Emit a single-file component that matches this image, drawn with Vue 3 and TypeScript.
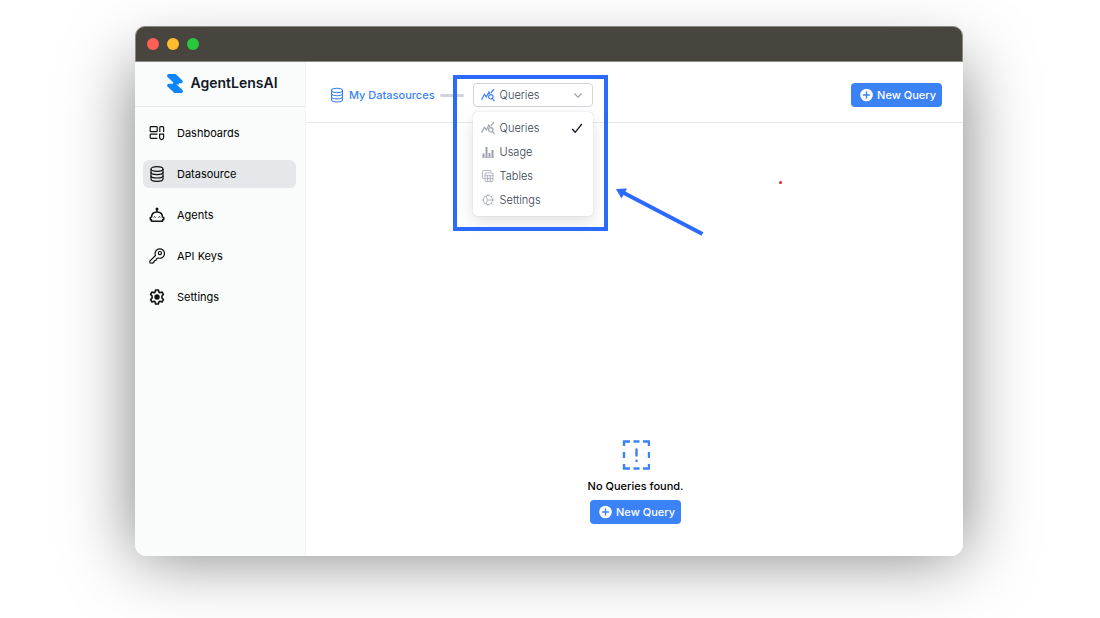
<script setup lang="ts">
import { ref } from 'vue'

type View = 'Queries' | 'Usage' | 'Tables' | 'Settings'

const navItems = ['Dashboards', 'Datasource', 'Agents', 'API Keys', 'Settings']
const views: View[] = ['Queries', 'Usage', 'Tables', 'Settings']

const activeNav = ref('Datasource')
const activeView = ref<View>('Queries')
const menuOpen = ref(true)

function selectView(view: View) {
  activeView.value = view
  menuOpen.value = false
}
</script>

<template>
  <div class="stage">
    <div class="window">
      <div class="titlebar">
        <span class="light red"></span>
        <span class="light yellow"></span>
        <span class="light green"></span>
      </div>

      <div class="body">
        <aside class="sidebar">
          <div class="brand">
            <svg class="logo" viewBox="0 0 16 19" aria-hidden="true">
              <path d="M1.5 0H8.6L15.4 6.6Q16.4 9.3 14 9.3H7.2L.3 2.7Q-.4 .4 1.5 0Z" fill="#0a84ff" />
              <path d="M1.6 9.7H8.8L15.6 16Q16.4 18.6 14.4 19H7.4L.5 12.4Q-.5 10.1 1.6 9.7Z" fill="#0a84ff" />
              <path d="M6 8.500h6v2H6z" fill="#0a84ff" />
            </svg>
            <span>AgentLensAI</span>
          </div>
          <nav class="nav">
            <a
              v-for="item in navItems"
              :key="item"
              href="#"
              class="nav-item"
              :class="{ active: item === activeNav }"
              @click.prevent="activeNav = item"
            >
              <svg v-if="item === 'Dashboards'" class="nav-icon" viewBox="0 0 16 16" aria-hidden="true">
                <g fill="none" stroke="#111" stroke-width="1.2" stroke-linejoin="round">
                  <rect x="1.2" y="1.7" width="7" height="5" rx=".8" />
                  <path d="M10.8 7V2.6q0-.9.9-.9h2q.9 0 .9.9V7" />
                  <path d="M8.4 9.2H2q-.8 0-.8.8v2.600q0 .8.8.8h6.400" />
                  <path d="M10.600 9.200h4v3.200q0 1.500-2 2.300-2-.8-2-2.300z" />
                </g>
              </svg>
              <svg v-else-if="item === 'Datasource'" class="nav-icon" viewBox="0 0 16 16" aria-hidden="true">
                <g fill="none" stroke="#111" stroke-width="1.2">
                  <ellipse cx="8" cy="3" rx="6" ry="2.300" />
                  <path d="M2 3v10c0 1.300 2.700 2.300 6 2.300s6-1 6-2.300V3" />
                  <path d="M2 6.300c0 1.300 2.700 2.300 6 2.300s6-1 6-2.300M2 9.700C2 11 4.700 12 8 12s6-1 6-2.300" />
                </g>
              </svg>
              <svg v-else-if="item === 'Agents'" class="nav-icon" viewBox="0 0 16 16" aria-hidden="true">
                <path d="M8 2v3M2.500 10.500C2.500 7 4.800 5 8 5s5.500 2 5.500 5.500M2.500 10.500H1.300v2.200h1.200v1.600h11v-1.600h1.200v-2.200h-1.200" fill="none" stroke="#111" stroke-width="1.500" stroke-linejoin="round" />
                <circle cx="8" cy="2" r="1.500" fill="#111" />
                <path d="M4.600 10.400q1-1.500 2 0M9.400 10.400q1-1.500 2 0" fill="none" stroke="#111" stroke-width="1" />
              </svg>
              <svg v-else-if="item === 'API Keys'" class="nav-icon" viewBox="0 0 16 16" aria-hidden="true">
                <g fill="none" stroke="#111" stroke-width="1.200" stroke-linejoin="round">
                  <path d="M6.500 7.500A4.700 4.700 0 1 1 9.300 10L7.500 10.800 7 12.300 5.500 12.500 5 14 3.600 15.200 1 15 .8 13.200Z" />
                  <circle cx="10.900" cy="5.100" r="1.600" />
                </g>
              </svg>
              <svg v-else class="nav-icon" viewBox="0 0 16 16" aria-hidden="true">
                <path d="M6.600 1h2.800l.4 2 1.200.7 2-.7 1.400 2.400L12.900 7v2l1.500 1.600L13 13l-2-.7-1.200.7-.4 2H6.600l-.4-2-1.200-.7-2 .7-1.400-2.400L3.100 9V7L1.600 5.400 3 3l2 .7L6.200 3z" fill="none" stroke="#111" stroke-width="1.600" stroke-linejoin="round" />
                <circle cx="8" cy="8" r="2.700" fill="#111" />
              </svg>
              <span>{{ item }}</span>
            </a>
          </nav>
        </aside>

        <main class="main">
          <header class="header">
            <a href="#" class="crumb" @click.prevent>
              <svg class="crumb-icon" viewBox="0 0 14 16" aria-hidden="true">
                <g fill="none" stroke="#3b82f6" stroke-width="1.100">
                  <ellipse cx="7" cy="3.500" rx="5.500" ry="2.200" />
                  <path d="M1.500 3.500v9.300c0 1.200 2.500 2.200 5.500 2.200s5.500-1 5.500-2.200V3.500" />
                  <path d="M1.500 6.600c0 1.200 2.500 2.200 5.500 2.200s5.500-1 5.500-2.200M1.500 9.700c0 1.200 2.500 2.200 5.500 2.200s5.500-1 5.500-2.200" />
                </g>
              </svg>
              <span>My Datasources</span>
            </a>
            <span class="divider"></span>

            <div class="picker">
              <button
                type="button"
                class="trigger"
                aria-haspopup="listbox"
                :aria-expanded="menuOpen"
                @click="menuOpen = !menuOpen"
              >
                <svg class="view-icon blue" viewBox="0 0 14 14" aria-hidden="true">
                  <path d="M.6 11.600 3.500 6.300l1.900 2.500 2.500-4.600.8 1.800M9.600 5.200 13 1.200" />
                  <circle cx="9.800" cy="8.800" r="2.200" />
                  <path d="m11.400 10.500 2 2.600" />
                </svg>
                <span class="label">{{ activeView }}</span>
                <svg class="chevron" viewBox="0 0 10 10" aria-hidden="true">
                  <path d="m1.300 3.500 3.700 3.700 3.700-3.700" />
                </svg>
              </button>

              <div v-if="menuOpen" class="menu" role="listbox" aria-label="View">
                <button
                  v-for="view in views"
                  :key="view"
                  type="button"
                  role="option"
                  class="option"
                  :aria-selected="view === activeView"
                  @click="selectView(view)"
                >
                  <svg v-if="view === 'Queries'" class="view-icon" viewBox="0 0 14 14" aria-hidden="true">
                    <path d="M.6 11.600 3.500 6.300l1.900 2.500 2.500-4.600.8 1.800M9.600 5.200 13 1.200" />
                    <circle cx="9.800" cy="8.800" r="2.200" />
                    <path d="m11.400 10.500 2 2.600" />
                  </svg>
                  <svg v-else-if="view === 'Usage'" class="view-icon solid" viewBox="0 0 14 14" aria-hidden="true">
                    <path d="M1.500 8.500h2V12h-2zM4.500 2h2v10h-2zM7.500 8h2v4h-2zM10.500 5h2v7h-2zM1 12.300h12v.7H1z" />
                  </svg>
                  <svg v-else-if="view === 'Tables'" class="view-icon thin" viewBox="0 0 14 14" aria-hidden="true">
                    <path d="M3.500 9.500H2.300q-.8 0-.8-.8V2.300q0-.8.8-.8h6.900q.8 0 .8.8V3.500" />
                    <rect x="4" y="4" width="8" height="8.500" rx=".8" />
                    <path d="M4 6.700h8M4 9.600h8M6.700 6.700v5.800M9.400 6.700v5.800" />
                  </svg>
                  <svg v-else class="view-icon thin" viewBox="0 0 14 14" aria-hidden="true">
                    <circle cx="7" cy="7" r="4.600" />
                    <path d="M7 2.400V.8M7 13.200v-1.600M2.400 7H.6M7 7h6.400M3.750 3.750 2.600 2.600M11.400 11.400l-1.150-1.150M3.750 10.250 2.600 11.400M11.400 2.600l-1.150 1.150M7 7 4.700 3M7 7l-2.300 4" />
                  </svg>
                  <span class="label">{{ view }}</span>
                  <svg v-if="view === activeView" class="check" viewBox="0 0 12 12" aria-hidden="true">
                    <path d="m1.200 7 3 3.300L10.800 2" />
                  </svg>
                </button>
              </div>

              <div class="highlight" aria-hidden="true"></div>
              <svg class="arrow" viewBox="0 0 90 50" aria-hidden="true">
                <path d="M7 4.500 86.500 46" stroke="#2b69ff" stroke-width="4" />
                <path d="M0 1 11 .5 5.500 10.500Z" fill="#2b69ff" />
              </svg>
            </div>

            <button type="button" class="primary push">
              <svg class="plus" viewBox="0 0 14 14" aria-hidden="true">
                <circle cx="7.500" cy="7" r="6.300" fill="#fff" />
                <path d="M7.500 4v6M4.500 7h6" stroke="#3b82f6" stroke-width="1.400" stroke-linecap="round" />
              </svg>
              <span>New Query</span>
            </button>
          </header>

          <section class="empty">
            <svg class="empty-icon" viewBox="0 0 28 30" aria-hidden="true">
              <g fill="none" stroke="#3b82f6" stroke-width="2.400">
                <path d="M2 6V1.500H8M21 1.500h6V6M27 24v4.500H21M8 28.500H2V24M11.500 1.500h6M11.500 28.500h6M2 12v6M27 12v6" />
                <path d="M14.500 9.500v6M14.500 20.800v.2" stroke-linecap="round" />
              </g>
            </svg>
            <p class="empty-text">No Queries found.</p>
            <button type="button" class="primary">
              <svg class="plus" viewBox="0 0 14 14" aria-hidden="true">
                <circle cx="7.500" cy="7" r="6.300" fill="#fff" />
                <path d="M7.500 4v6M4.500 7h6" stroke="#3b82f6" stroke-width="1.400" stroke-linecap="round" />
              </svg>
              <span>New Query</span>
            </button>
            <span class="marker" aria-hidden="true"></span>
          </section>
        </main>
      </div>
    </div>
  </div>
</template>

<style>
body {
  background: #fff;
}
</style>

<style scoped>
* {
  box-sizing: border-box;
}
.stage {
  display: flex;
  min-height: 100vh;
  padding: 26px 137px 62px 135px;
  overflow: hidden;
  font-family: Inter, "Liberation Sans", sans-serif;
  font-size: 11px;
  line-height: 16px;
  color: #111827;
}
button {
  margin: 0;
  font: inherit;
  cursor: pointer;
}
a {
  color: inherit;
  text-decoration: none;
}
svg {
  display: block;
  flex: none;
}
.window {
  position: relative;
  flex: 1;
  display: flex;
  flex-direction: column;
  min-width: 0;
}
.window::before {
  content: "";
  position: absolute;
  inset: 36px 0 0;
  border-radius: 12px;
  box-shadow: 0 0 68px rgba(0, 0, 0, 0.5);
}
.titlebar {
  position: relative;
  display: flex;
  align-items: center;
  gap: 8px;
  height: 36px;
  padding: 0 11px;
  background: #48443e;
  border: 1px solid #8b8984;
  border-radius: 10px 10px 0 0;
}
.light {
  width: 12px;
  height: 12px;
  border-radius: 50%;
}
.red {
  background: #ff5f57;
}
.yellow {
  background: #febc2e;
}
.green {
  background: #28c840;
}
.body {
  position: relative;
  flex: 1;
  display: flex;
  background: #fff;
  border-radius: 0 0 12px 12px;
}
.sidebar {
  width: 171px;
  flex: none;
  background: #fafcfb;
  border-right: 1px solid #f3f4f6;
  border-radius: 0 0 0 12px;
}
.brand {
  display: flex;
  align-items: center;
  justify-content: center;
  gap: 7px;
  height: 45px;
  padding: 0 0 2px 5px;
  border-bottom: 1px solid #e5e7eb;
  font-size: 14px;
  font-weight: 600;
}
.logo {
  width: 16px;
  height: 19px;
}
.nav {
  display: flex;
  flex-direction: column;
  gap: 13px;
  padding: 12px 9px 0 8px;
}
.nav-item {
  display: flex;
  align-items: center;
  gap: 12px;
  height: 28px;
  padding: 0 6px;
  border-radius: 6px;
  color: #000;
}
.nav-item.active {
  background: #e5e7eb;
}
.nav-icon {
  width: 16px;
  height: 16px;
}
.main {
  flex: 1;
  min-width: 0;
  display: flex;
  flex-direction: column;
}
.header {
  display: flex;
  align-items: center;
  height: 61px;
  padding: 6px 21px 0 24px;
  border-bottom: 1px solid #e5e7eb;
}
.crumb {
  display: flex;
  align-items: center;
  gap: 5px;
  color: #3b82f6;
  font-weight: 500;
}
.crumb-icon {
  width: 14px;
  height: 16px;
}
.divider {
  width: 24px;
  height: 3px;
  margin: 0 9px 0 5px;
  border-radius: 2px;
  background: #d1d5db;
}
.picker {
  position: relative;
  width: 120px;
}
.trigger {
  display: flex;
  align-items: center;
  gap: 5px;
  width: 100%;
  height: 24px;
  padding: 0 9px 0 7px;
  background: #fff;
  border: 1px solid #d1d5db;
  border-radius: 4px;
  color: #374151;
  font-weight: 300;
}
.label {
  flex: 1;
  text-align: left;
}
.view-icon {
  width: 14px;
  height: 14px;
  fill: none;
  stroke: #9ca3af;
  stroke-width: 1.2;
}
.view-icon.blue {
  stroke: #3b82f6;
}
.view-icon.thin {
  stroke-width: 0.8;
}
.view-icon.solid {
  fill: #9ca3af;
  stroke: none;
}
.chevron {
  width: 10px;
  height: 10px;
  fill: none;
  stroke: #9ca3af;
  stroke-width: 1.2;
}
.menu {
  position: absolute;
  top: 29px;
  left: 0;
  right: 0;
  padding: 4px 0;
  background: #fff;
  border-radius: 4px;
  box-shadow: 0 0 1px rgba(0, 0, 0, 0.3), 0 6px 16px rgba(0, 0, 0, 0.12);
}
.option {
  display: flex;
  align-items: center;
  gap: 5px;
  width: 100%;
  height: 24px;
  padding: 0 10px 0 8px;
  background: none;
  border: 0;
  color: #374151;
  font-weight: 300;
}
.check {
  width: 12px;
  height: 12px;
  fill: none;
  stroke: #111827;
  stroke-width: 1.3;
}
.highlight {
  position: absolute;
  top: -8px;
  left: -20px;
  width: 155px;
  height: 156px;
  border: 4px solid #2b69ff;
  pointer-events: none;
}
.arrow {
  position: absolute;
  top: 105px;
  left: 143px;
  width: 90px;
  height: 50px;
  pointer-events: none;
}
.primary {
  display: flex;
  align-items: center;
  gap: 4px;
  height: 24px;
  padding: 0 6px 0 8px;
  background: #3b82f6;
  border: 0;
  border-radius: 4px;
  color: #fff;
  font-weight: 500;
}
.push {
  margin-left: auto;
}
.plus {
  width: 14px;
  height: 14px;
}
.empty {
  position: relative;
  flex: 1;
  display: flex;
  flex-direction: column;
  align-items: center;
  justify-content: flex-end;
  padding: 0 0 32px 2px;
}
.empty-icon {
  width: 28px;
  height: 30px;
}
.empty-text {
  margin: 8px 0 6px;
  color: #000;
  font-weight: 500;
}
.marker {
  position: absolute;
  top: 58px;
  left: 473px;
  width: 3px;
  height: 3px;
  border-radius: 50%;
  background: #ef1f1f;
}
</style>
